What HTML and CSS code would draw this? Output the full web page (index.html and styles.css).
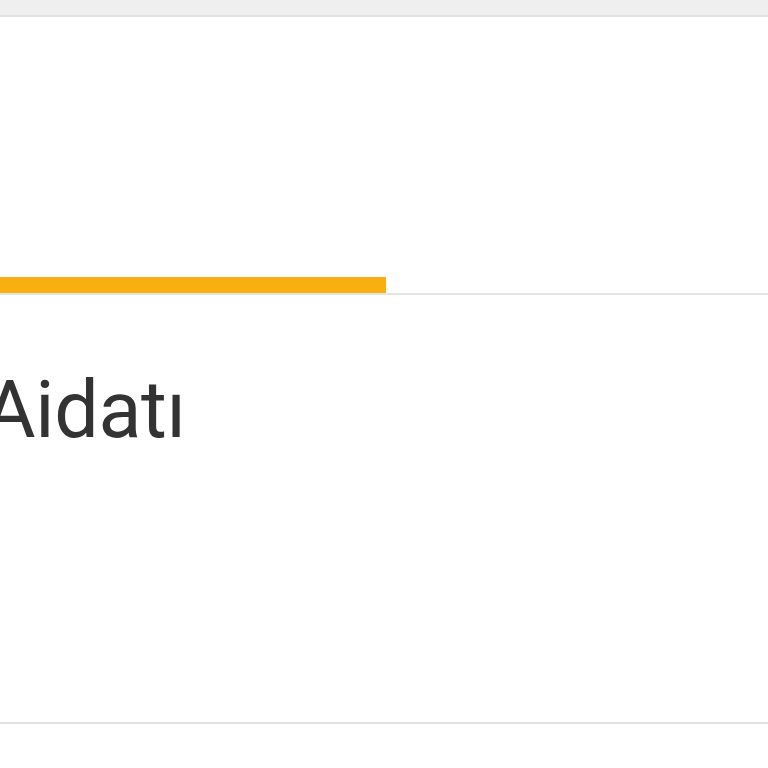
FILE: index.html
```html
<!DOCTYPE html>
<html lang="tr">
<head>
  <meta charset="UTF-8" />
  <meta name="viewport" content="width=device-width, initial-scale=1.0" />
  <title>Aidatı</title>
  <link rel="stylesheet" href="styles.css">
</head>
<body>
  <div class="topbar"></div>
  <div class="panel">
    <div class="progress">
      <div class="progress-fill" style="width: 386px"></div>
    </div>
    <div class="title">Aidatı</div>
  </div>
  <div class="footer"></div>
</body>
</html>
```

FILE: styles.css
```css
body {
  margin: 0;
  font-family: Roboto, "Liberation Sans", sans-serif;
  background: #fff;
  overflow: hidden;
}
.topbar {
  height: 15px;
  background: #efefef;
  border-bottom: 2px solid #e2e2e2;
}
.panel {
  background: #fff;
  height: 707px;
  padding-top: 260px;
  border-bottom: 2px solid #e2e2e2;
  box-sizing: border-box;
}
.progress {
  height: 16px;
  border-bottom: 2px solid #e4e4e4;
}
.progress-fill {
  height: 16px;
  background: #f7b00f;
}
.title {
  margin-top: 65px;
  margin-left: -16px;
  font-size: 79px;
  line-height: 100px;
  letter-spacing: -0.3px;
  color: #333;
}
.footer {
  height: 44px;
  background: #fff;
}
```
